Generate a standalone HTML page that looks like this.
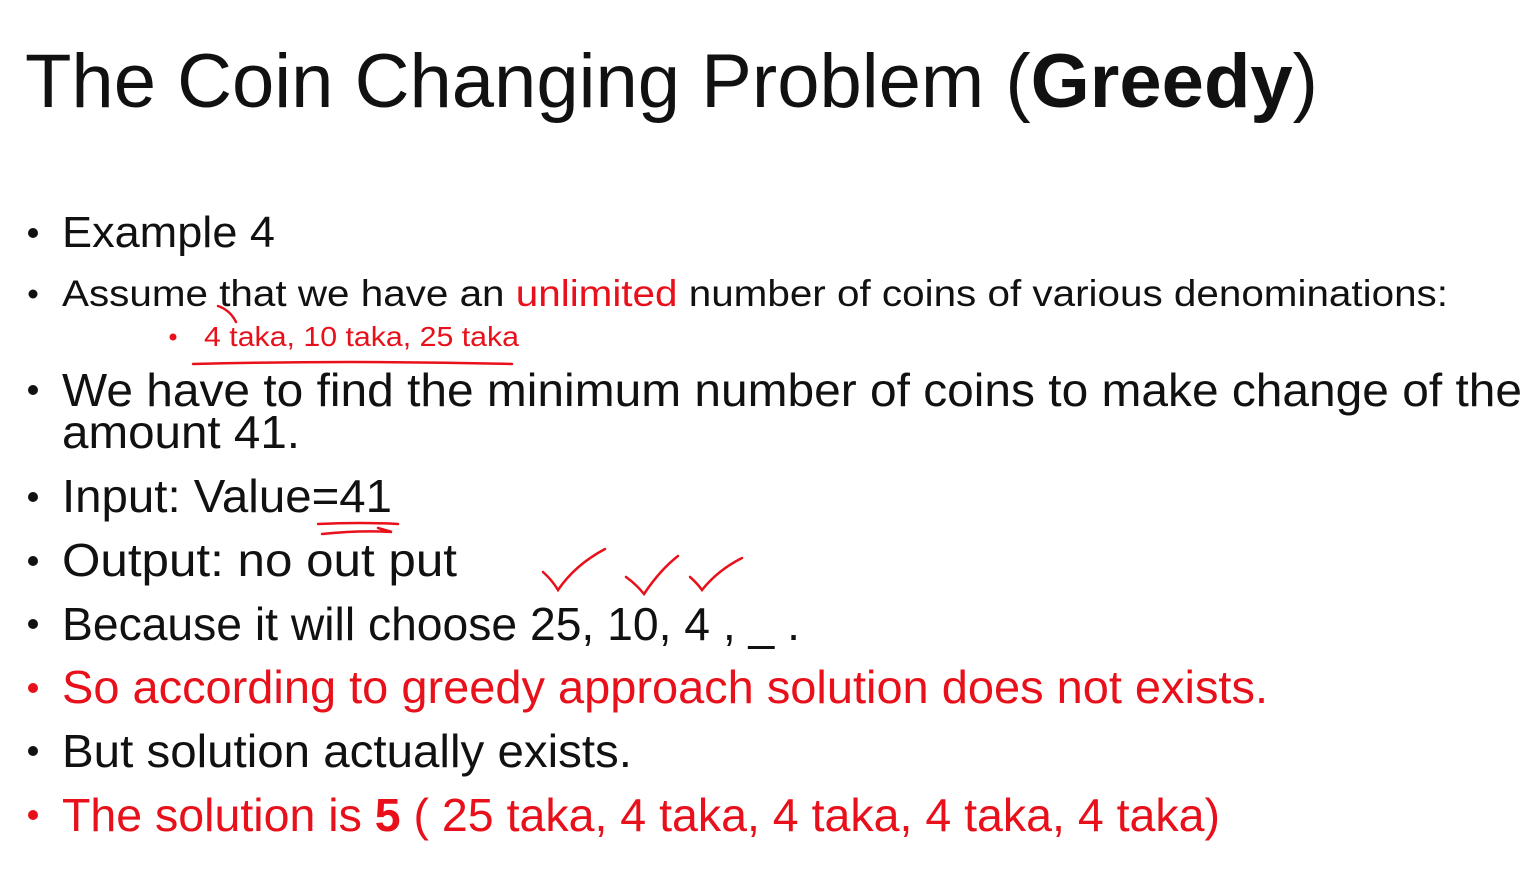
<!DOCTYPE html>
<html><head><meta charset="utf-8"><style>
html,body{margin:0;padding:0;background:#fff;width:1540px;height:884px;overflow:hidden}
svg{display:block}
text{font-family:"Liberation Sans",sans-serif}
</style></head><body>
<svg width="1540" height="884" viewBox="0 0 1540 884" xmlns="http://www.w3.org/2000/svg">
<g fill="#111">
<text x="25" y="107" font-size="76" textLength="1293" lengthAdjust="spacingAndGlyphs">The Coin Changing Problem (<tspan font-weight="bold">Greedy</tspan>)</text>
<circle cx="33" cy="233" r="5"/>
<text x="62" y="247" font-size="44" textLength="213" lengthAdjust="spacingAndGlyphs">Example 4</text>
<circle cx="33" cy="294" r="4.5"/>
<text x="62" y="306" font-size="37" textLength="1386" lengthAdjust="spacingAndGlyphs">Assume that we have an <tspan fill="#e8101a">unlimited</tspan> number of coins of various denominations:</text>
<circle cx="173" cy="337" r="3.5" fill="#e8101a"/>
<text x="204" y="346" font-size="28" fill="#e8101a" textLength="315" lengthAdjust="spacingAndGlyphs">4 taka, 10 taka, 25 taka</text>
<circle cx="33" cy="390" r="5"/>
<text x="62" y="406" font-size="46" textLength="1460" lengthAdjust="spacingAndGlyphs">We have to find the minimum number of coins to make change of the</text>
<text x="62" y="448" font-size="46" textLength="238" lengthAdjust="spacingAndGlyphs">amount 41.</text>
<circle cx="33" cy="497" r="5"/>
<text x="62" y="512" font-size="46" textLength="330" lengthAdjust="spacingAndGlyphs">Input: Value=41</text>
<circle cx="33" cy="561" r="5"/>
<text x="62" y="576" font-size="46" textLength="395" lengthAdjust="spacingAndGlyphs">Output: no out put</text>
<circle cx="33" cy="624" r="5"/>
<text x="62" y="640" font-size="46" textLength="738" lengthAdjust="spacingAndGlyphs">Because it will choose 25, 10, 4 , _ .</text>
<circle cx="33" cy="688" r="5" fill="#e8101a"/>
<text x="62" y="703" font-size="46" fill="#e8101a" textLength="1206" lengthAdjust="spacingAndGlyphs">So according to greedy approach solution does not exists.</text>
<circle cx="33" cy="751" r="5"/>
<text x="62" y="767" font-size="46" textLength="570" lengthAdjust="spacingAndGlyphs">But solution actually exists.</text>
<circle cx="33" cy="815" r="5" fill="#e8101a"/>
<text x="62" y="831" font-size="46" fill="#e8101a" textLength="1158" lengthAdjust="spacingAndGlyphs">The solution is <tspan font-weight="bold">5</tspan> ( 25 taka, 4 taka, 4 taka, 4 taka, 4 taka)</text>
</g>
<g fill="none" stroke="#e8101a" stroke-width="2.5" stroke-linecap="round">
<path d="M193 364 Q350 360 512 364"/>
<path d="M218 306 Q230 310 236 322"/>
<path d="M318 524 Q360 522 398 524"/>
<path d="M322 534 Q360 530 392 532 L378 528"/>
<path d="M543 572 Q552 580 558 590 Q575 565 605 549"/>
<path d="M626 577 Q636 584 644 594 Q660 570 678 556"/>
<path d="M690 577 Q697 583 702 590 Q718 570 742 558"/>
</g>
</svg>
</body></html>
